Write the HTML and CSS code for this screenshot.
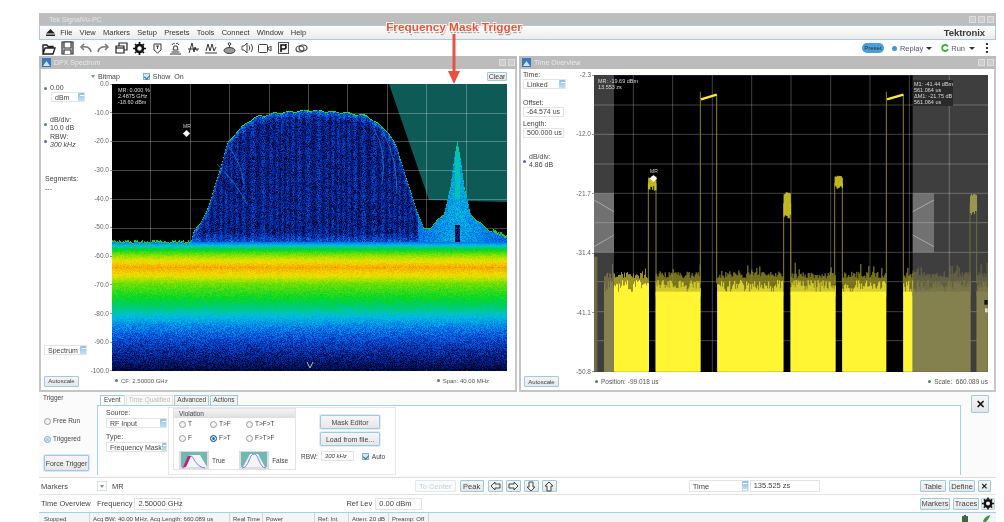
FILE: index.html
```html
<!DOCTYPE html>
<html lang="en">
<head>
<meta charset="utf-8">
<title>Tek SignalVu-PC</title>
<link rel="stylesheet" href="styles.css">
</head>
<body>
<div class="app">
  <header class="titlebar">
    <span class="title">Tek SignalVu-PC</span>
    <span class="winbtns"><i></i><i></i><i></i></span>
  </header>
  <nav class="menubar">
    <svg class="eject" width="9" height="7" viewBox="0 0 9 7"><path d="M4.5 0 9 4.5H0zM0 5.5h9V7H0z" fill="#222"/></svg>
    <span>File</span><span>View</span><span>Markers</span><span>Setup</span><span>Presets</span><span>Tools</span><span>Connect</span><span>Window</span><span>Help</span>
    <b class="brand">Tektronix</b>
  </nav>
  <div class="toolbar">
    <div class="tools">
      <svg width="14" height="13" viewBox="0 0 14 13" fill="none" stroke="#222" stroke-width="1.4"><path d="M1 12V3h4l1 1.500h5V6M1 12l2-6h10l-2 6z"/></svg>
      <svg width="13" height="14" viewBox="0 0 13 14" fill="#ddd" stroke="#333" stroke-width="1.2"><path d="M1 1h11v12H1z"/><path d="M3 1h7v6H3zM3 13v-4h7v4" fill="#fff"/></svg>
      <svg width="13" height="10" viewBox="0 0 13 10" fill="none" stroke="#777" stroke-width="1.5"><path d="M12 9C11 4 7 3 3 4"/><path d="M5 1 2 4l3 3" /></svg>
      <svg width="13" height="10" viewBox="0 0 13 10" fill="none" stroke="#777" stroke-width="1.500"><path d="M1 9c1-5 5-6 9-5"/><path d="m8 1 3 3-3 3"/></svg>
      <svg width="13" height="12" viewBox="0 0 13 12" fill="#fff" stroke="#222" stroke-width="1.200"><path d="M4 1h8v7H4z"/><path d="M1 4h8v7H1z"/><path d="M1 6h8" /></svg>
      <svg width="13" height="13" viewBox="0 0 13 13"><circle cx="6.500" cy="6.500" r="3.500" fill="none" stroke="#111" stroke-width="2.600"/><path d="M6.500 0v13M0 6.500h13M2 2l9 9M11 2l-9 9" stroke="#111" stroke-width="1.700" stroke-dasharray="2 9 2"/></svg>
      <svg width="9" height="11" viewBox="0 0 9 11" fill="none" stroke="#333"><path d="M1 1h7v6L4.500 10 1 7z"/><path d="M3 3h3M4.500 3v3" /></svg>
      <svg width="13" height="13" viewBox="0 0 13 13" fill="none" stroke="#333"><path d="M1 12h11M2.500 10h8M4 8h5l-1-4H5zM3 3c1-2 2-2 3-1M7 2c1-1 2-1 3 1"/></svg>
      <svg width="11" height="12" viewBox="0 0 11 12" fill="none" stroke="#333"><path d="M1 11 4 1l2 9 1-5 1 3h2M0 7h11"/></svg>
      <svg width="12" height="12" viewBox="0 0 12 12" fill="none" stroke="#333"><path d="M1 9l2-7 2 7 2-7 2 7 2-4M0 11h12"/></svg>
      <svg width="13" height="12" viewBox="0 0 13 12" fill="#999" stroke="#333"><ellipse cx="6.500" cy="8.500" rx="5.500" ry="3"/><path d="M6.500 5V1.500" fill="none"/><circle cx="6.500" cy="2" r="1.300" fill="#fff"/></svg>
      <svg width="13" height="12" viewBox="0 0 13 12" fill="none" stroke="#444"><path d="M1 4h2l3-3v10L3 8H1zM8 3.500c1 1.500 1 3.500 0 5M10 2c2 2.500 2 5.500 0 8"/></svg>
      <svg width="14" height="9" viewBox="0 0 14 9" fill="#fff" stroke="#444"><rect x=".5" y=".5" width="9" height="8" rx="1"/><path d="m10 4 3-2v5l-3-2z"/></svg>
      <svg width="11" height="12" viewBox="0 0 11 12"><rect x=".5" y=".5" width="10" height="11" fill="#f4f4f4" stroke="#555"/><path d="M3 10V3h3a1.700 1.700 0 0 1 0 4H3M8 2v1" fill="none" stroke="#111" stroke-width="1.600"/></svg>
      <svg width="13" height="9" viewBox="0 0 13 9" fill="none" stroke="#444" stroke-width="1.200"><ellipse cx="5" cy="5" rx="4" ry="3"/><ellipse cx="8" cy="4" rx="4" ry="3"/></svg>
    </div>
    <div class="runctl">
      <span class="preset">Preset</span>
      <span class="dot blue"></span><span>Replay</span><i class="caret c1"></i>
      <svg class="runicon" width="8" height="8" viewBox="0 0 8 8" fill="none" stroke="#3fa93f" stroke-width="1.800"><path d="M6.800 2.500A3 3 0 1 0 7 5"/></svg><span>Run</span><i class="caret c2"></i>
      <span class="kebab"><i></i><i></i><i></i></span>
    </div>
  </div>

  <main class="panels">
    <section class="panel dpx">
      <div class="panelhead"><svg class="panelicon" width="9" height="9" viewBox="0 0 9 9"><path d="M0 0h9v9H0z" fill="#3b78b5"/><path d="M1 8 4.500 3 8 8z" fill="#cfe3f5"/></svg><span>DPX Spectrum</span><span class="winbtns"><i></i><i></i></span></div>
      <div class="dpxgrid">
        <div class="topstrip">
          <span class="tri"></span><span class="bm">Bitmap</span>
          <i class="check"></i><span>Show</span><span class="on">On</span>
          <button class="btn clear">Clear</button>
        </div>
        <aside class="side">
          <div class="setting"><i class="dot green"></i><span>0.00</span></div>
          <div class="sel unit"><span>dBm</span><i class="spin"></i></div>
          <div class="setting div"><i class="dot green"></i><span>dB/div:<br>10.0 dB</span></div>
          <div class="setting rbw"><i class="dot blue"></i><span>RBW:<br><em>300 kHz</em></span></div>
          <div class="segs">Segments:<br>---</div>
          <div class="sel spectrum"><span>Spectrum</span><i class="spin"></i></div>
        </aside>
        <div class="axis axisl">
          <span>0.0</span><span>-10.0</span><span>-20.0</span><span>-30.0</span><span>-40.0</span><span>-50.0</span><span>-60.0</span><span>-70.0</span><span>-80.0</span><span>-90.0</span><span>-100.0</span>
        </div>
        <div class="plot">
          <canvas id="dpx" width="395" height="287"></canvas>
          <div class="readout rdpx">MR: 0.000 %<br>2.4875 GHz<br>-18.60 dBm</div>
          <div class="marker mdpx"><span>MR</span><i></i></div>
        </div>
        <footer class="foot">
          <button class="btn auto">Autoscale</button>
          <span class="cf"><i class="dot green"></i>CF: 2.50000 GHz</span>
          <span class="span"><i class="dot green"></i>Span: 40.00 MHz</span>
        </footer>
      </div>
    </section>
    <section class="panel overview">
      <div class="panelhead"><svg class="panelicon" width="9" height="9" viewBox="0 0 9 9"><path d="M0 0h9v9H0z" fill="#3b78b5"/><path d="M1 8 4.500 3 8 8z" fill="#cfe3f5"/></svg><span>Time Overview</span><span class="winbtns"><i></i><i></i></span></div>
      <div class="ovgrid">
        <aside class="side ovside">
          <div class="lbl">Time:</div>
          <div class="sel linked"><span>Linked</span><i class="spin"></i></div>
          <div class="lbl offset">Offset:</div>
          <div class="field">-64.574 us</div>
          <div class="lbl length">Length:</div>
          <div class="field">500.000 us</div>
          <div class="setting ovdiv"><i class="dot blue"></i><span>dB/div:<br>4.86 dB</span></div>
        </aside>
        <div class="axis axisr">
          <span>-2.3</span><span>-12.0</span><span>-21.7</span><span>-31.4</span><span>-41.1</span><span>-50.8</span>
        </div>
        <div class="plot plotr">
          <canvas id="time" width="394" height="297"></canvas>
          <div class="readout rmr">MR: -19.69 dBm<br>13.553 zs</div>
          <div class="readout rm1">M1: -41.44 dBm<br>561.064 us<br>&#916;M1: -21.75 dB<br>561.064 us</div>
          <div class="marker mtime"><span>MR</span><i></i></div>
        </div>
        <footer class="foot">
          <button class="btn auto">Autoscale</button>
          <span class="cf"><i class="dot green"></i>Position: -99.018 us</span>
          <span class="span"><i class="dot green"></i>Scale: &nbsp;660.089 us</span>
        </footer>
      </div>
    </section>
  </main>

  <section class="trigger">
    <div class="trigleft">
      <div class="trigtitle">Trigger</div>
      <label class="radio freerun"><i></i>Free Run</label>
      <label class="radio"><i class="inner"></i>Triggered</label>
      <button class="btn force">Force Trigger</button>
    </div>
    <div class="trigmain">
      <div class="tabs"><span class="tab active">Event</span><span class="tab dis">Time Qualified</span><span class="tab">Advanced</span><span class="tab">Actions</span></div>
      <div class="tabbody">
        <div class="srccol">
          <div class="lbl">Source:</div>
          <div class="sel src"><span>RF Input</span><i class="spin"></i></div>
          <div class="lbl type">Type:</div>
          <div class="sel src"><span>Frequency Mask</span><i class="spin"></i></div>
        </div>
        <div class="maskbox">
          <div class="violation">
            <div class="vhead">Violation</div>
            <div class="vgrid">
              <label class="radio"><i></i>T</label><label class="radio"><i></i>T&gt;F</label><label class="radio"><i></i>T&gt;F&gt;T</label>
              <label class="radio"><i></i>F</label><label class="radio"><i class="sel-on"></i>F&gt;T</label><label class="radio"><i></i>F&gt;T&gt;F</label>
            </div>
            <div class="thumbs">
              <svg width="30" height="18" viewBox="0 0 30 18"><rect width="30" height="18" fill="#ddd"/><path d="M2 1h26v15H2z" fill="#6fb9b2"/><path d="M4 16 11 4h10l7 12z" fill="#f2f5f7"/><path d="M3 17c6 0 6-12 9-12s4 11 14 12" fill="none" stroke="#8a7be0"/><path d="M4 16 9 5h3l-5 11z" fill="#c0207a"/></svg>
              <span>True</span>
              <svg class="falseicon" width="30" height="18" viewBox="0 0 30 18"><rect width="30" height="18" fill="#ddd"/><path d="M2 1h26v15H2z" fill="#6fb9b2"/><path d="M4 16 11 3h8l7 13z" fill="#f2f5f7"/><path d="M3 17c7 0 7-14 12-14s5 14 12 14" fill="none" stroke="#8a7be0"/></svg>
              <span>False</span>
            </div>
          </div>
          <div class="maskctl">
            <button class="btn wide">Mask Editor</button>
            <button class="btn wide">Load from file...</button>
            <div class="rbwrow"><span>RBW:</span><span class="field small"><em>300 kHz</em></span><i class="check"></i><span>Auto</span></div>
          </div>
        </div>
      </div>
    </div>
    <div class="trigclose"><button class="btn closebig">&#10005;</button></div>
  </section>

  <section class="markers">
    <span class="rowtitle">Markers</span>
    <span class="dropbtn"><i class="tri"></i></span>
    <span class="mr">MR</span>
    <button class="btn dim tocenter">To Center</button>
    <button class="btn">Peak</button>
    <button class="btn arrow"><svg width="11" height="10" viewBox="0 0 11 10"><path d="M1 5l4-4v2h5v4H5v2z" fill="#f4f4f4" stroke="#444"/></svg></button>
    <button class="btn arrow"><svg width="11" height="10" viewBox="0 0 11 10"><path d="M10 5 6 1v2H1v4h5v2z" fill="#f4f4f4" stroke="#444"/></svg></button>
    <button class="btn arrow"><svg width="10" height="11" viewBox="0 0 10 11"><path d="M5 10 1 6h2V1h4v5h2z" fill="#f4f4f4" stroke="#444"/></svg></button>
    <button class="btn arrow"><svg width="10" height="11" viewBox="0 0 10 11"><path d="M5 1 1 5h2v5h4V5h2z" fill="#f4f4f4" stroke="#444"/></svg></button>
    <div class="sel timesel"><span>Time</span><i class="spin"></i></div>
    <span class="field timeval">135.525 zs</span>
    <button class="btn table">Table</button>
    <button class="btn">Define</button>
    <button class="btn xbtn">&#10005;</button>
  </section>

  <section class="overviewrow">
    <span class="rowtitle">Time Overview</span>
    <span class="freq">Frequency</span><span class="field rowfield">2.50000 GHz</span>
    <span class="ref">Ref Lev</span><span class="field rowfield">0.00 dBm</span>
    <button class="btn mk">Markers</button>
    <button class="btn">Traces</button>
    <button class="btn gear"><svg width="13" height="13" viewBox="0 0 13 13"><circle cx="6.500" cy="6.500" r="3.500" fill="none" stroke="#111" stroke-width="2.600"/><path d="M6.500 0v13M0 6.500h13M2 2l9 9M11 2l-9 9" stroke="#111" stroke-width="1.700" stroke-dasharray="2 9 2"/></svg></button>
  </section>

  <footer class="status">
    <span>Stopped</span><span>Acq BW: 40.00 MHz, Acq Length: 660.089 us</span><span>Real Time</span><span>Power</span><span>Ref: Int</span><span>Atten: 20 dB</span><span>Preamp: Off</span>
    <span class="statusicons">
      <svg width="6" height="8" viewBox="0 0 6 8"><path d="M2 0h2v1h2v7H0V1h2z" fill="#3c6a3c"/></svg>
      <svg width="8" height="8" viewBox="0 0 8 8"><path d="M1 8C1 4 4 1 8 0 7 4 5 7 1 8z" fill="#3f9a3f"/></svg>
    </span>
  </footer>

  <div class="annotation">
    <span class="anntext">Frequency Mask Trigger</span>
    <svg width="14" height="51" viewBox="0 0 14 51"><path d="M7 0v40" stroke="#e9503e" stroke-width="3"/><path d="M1 37h12L7 50z" fill="#e9503e"/></svg>
  </div>
</div>
<script src="script.js"></script>
</body>
</html>
```
FILE: styles.css
```css
* { box-sizing: border-box; }
html, body { margin: 0; padding: 0; background: #fff; }
body { width: 1004px; height: 522px; overflow: hidden; font-family: "Liberation Sans", Arial, sans-serif; font-size: 7px; color: #444; }
.app { position: relative; width: 957px; height: 509px; margin: 13px 0 0 39px; display: flex; flex-direction: column; filter: blur(.5px); }
i { display: block; font-style: normal; }
button { font-family: inherit; }

.titlebar { height: 12px; flex: none; background: #bdbdbd; display: flex; align-items: center; justify-content: space-between; padding: 0 2px 0 10px; color: #e6e6e6; font-size: 7px; }
.winbtns { display: flex; gap: 2px; margin-left: auto; }
.winbtns i { width: 7px; height: 7px; background: #ccc; border: 1px solid #ddd; }

.menubar { height: 15px; flex: none; display: flex; align-items: center; gap: 7.250px; padding: 0 10px 0 6px; background: linear-gradient(#fdfdfd, #ececec); border: 1px solid #a8cde0; font-size: 7.500px; color: #333; }
.eject { margin-right: -2px; }
.brand { margin-left: auto; font-size: 9.500px; color: #3a3a3a; letter-spacing: -.1px; }

.toolbar { height: 16px; flex: none; display: flex; align-items: center; justify-content: space-between; background: #fff; }
.tools { display: grid; grid-template-columns: repeat(15, 18px); justify-items: center; align-items: center; margin-left: 1px; }
.runctl { display: flex; align-items: center; font-size: 7.500px; color: #557; margin-right: 8px; }
.preset { width: 22px; height: 10px; border-radius: 5px; background: #4b9fd8; color: #234; font-size: 6px; text-align: center; line-height: 10px; margin-right: 8px; }
.dot { width: 3px; height: 3px; border-radius: 50%; flex: none; }
.dot.blue { background: #4b6fb0; }
.dot.green { background: #4e8a4e; }
.runctl .dot.blue { width: 5px; height: 5px; background: #3f95d8; margin-right: 3px; }
.caret { width: 0; height: 0; border: 3px solid transparent; border-top: 3.500px solid #333; border-bottom: 0; }
.c1 { margin: 0 9px 0 3px; }
.c2 { margin: 0 11px 0 4px; }
.runicon { margin-right: 2px; }
.kebab { display: flex; flex-direction: column; gap: 2px; }
.kebab i { width: 2px; height: 2px; background: #333; }

.panels { height: 336px; flex: none; display: grid; grid-template-columns: 478px 477px; gap: 2px; }
.panel { background: #fff; border: 2px solid #c6c6c6; border-top: 0; display: flex; flex-direction: column; min-width: 0; }
.panelhead { height: 13px; flex: none; margin: 0 -2px; padding: 0 2px 0 3px; background: #bcbcbc; color: #e9e9e9; display: flex; align-items: center; gap: 3px; font-size: 7px; }
.panelhead .winbtns { margin-left: auto; }

.dpxgrid { flex: 1; display: grid; grid-template-columns: 49px 22px 395px; grid-template-rows: 15px 287px 1fr; }
.topstrip { grid-column: 2 / 4; grid-row: 1; display: flex; align-items: center; gap: 3px; font-size: 7px; padding-left: 1px; }
.tri { width: 0; height: 0; border: 2.500px solid transparent; border-top: 3px solid #6d8fb3; border-bottom: 0; }
.bm { margin-right: 20px; }
.check { width: 7px; height: 7px; flex: none; background: #d5e8f5; border: 1px solid #7fb3d5; position: relative; }
.check::after { content: ""; position: absolute; left: 1px; top: 0; width: 3px; height: 4px; border: solid #2e6da4; border-width: 0 1px 1px 0; transform: rotate(40deg); }
.on { margin-left: 1px; }
.clear { margin-left: auto; width: 20px; height: 9px; font-size: 6px; }

.btn { display: inline-flex; align-items: center; justify-content: center; padding: 0 2px; border: 1px solid #9fcbe2; border-radius: 1px; background: linear-gradient(#f6f6f6, #e6e6e6); color: #444; font-size: 7px; white-space: nowrap; }

.side { grid-column: 1; grid-row: 1 / 3; display: flex; flex-direction: column; padding: 15px 0 0 3px; }
.setting { display: flex; align-items: center; gap: 3px; line-height: 8px; }
.setting.div { margin-top: 14px; }
.setting.rbw { margin-top: 1px; }
.sel { display: flex; align-items: center; justify-content: space-between; height: 10px; padding-left: 3px; background: #fff; border: 1px solid #e4e4e4; color: #444; white-space: nowrap; overflow: hidden; }
.spin { width: 7px; height: 9px; margin: 0 -1px 0 0; background: linear-gradient(#8ec1e4, #cfe3f2); border-radius: 1px; position: relative; flex: none; }
.spin::after { content: ""; position: absolute; left: 1.500px; top: 2px; width: 4px; height: 5px; border-top: 1px solid #fff; border-bottom: 1px solid #fff; }
.unit { width: 34px; margin: 0 0 0 7px; }
.segs { margin: 25px 0 0 1px; line-height: 10px; }
.spectrum { width: 43px; margin: auto 0 16px 0; }

.axis { display: flex; flex-direction: column; justify-content: space-between; align-items: flex-end; margin: -4px 0; font-size: 6.500px; line-height: 8px; color: #666; grid-row: 2; }
.axis span { display: flex; align-items: center; gap: 1px; }
.axis span::after { content: ""; width: 2px; height: 1px; background: #999; }
.axisl { grid-column: 2; }

.plot { position: relative; background: #000; }
.dpxgrid .plot { grid-column: 3; grid-row: 2; }
canvas { display: block; }
.readout { position: absolute; font-size: 5.500px; line-height: 6px; color: #d8d8d8; white-space: nowrap; }
.rdpx { left: 6px; top: 3px; }
.marker { position: absolute; display: flex; flex-direction: column; align-items: center; font-size: 5px; color: #ccc; line-height: 6px; }
.marker i { width: 5px; height: 5px; margin-top: 2px; background: #fff; transform: rotate(45deg); }
.mdpx { left: 71px; top: 39px; }
.mtime { left: 56px; top: 93px; }

.foot { grid-column: 1 / -1; display: flex; align-items: center; padding-left: 3px; font-size: 6.500px; color: #555; }
.auto { width: 35px; height: 11px; font-size: 6px; margin-top: 1px; }
.cf, .span { display: flex; align-items: center; gap: 3px; }
.dpx .foot { font-size: 6px; }
.dpx .cf { margin-left: 36px; }
.dpx .span { margin-left: auto; margin-right: 18px; }

.ovgrid { flex: 1; display: grid; grid-template-columns: 51px 22px 394px; grid-template-rows: 6px 297px 1fr; }
.ovside { padding: 2px 0 0 2px; grid-row: 1 / 3; }
.lbl { line-height: 8px; }
.field { display: block; background: #fff; border: 1px solid #e4e4e4; height: 10px; line-height: 8px; padding-left: 3px; color: #444; width: 41px; white-space: nowrap; }
.linked { width: 43px; }
.offset { margin-top: 10px; }
.length { margin-top: 3px; }
.ovdiv { margin-top: 15px; }
.axisr { grid-column: 2; }
.ovgrid .plot { grid-column: 3; grid-row: 2; }
.rmr { left: 4px; top: 3px; }
.rm1 { left: 319px; top: 5px; width: 40px; padding: 1px 1px; background: #2a2a2a; overflow: hidden; }
.ovgrid .cf { margin-left: 36px; }
.ovgrid .span { margin-left: auto; margin-right: 0; }

.trigger { height: 86px; flex: none; display: grid; grid-template-columns: 58px 864px 1fr; background: #fbfbfb; border-bottom: 1px solid #ddd; padding-top: 1px; }
.trigleft { padding: 1px 0 0 4px; display: flex; flex-direction: column; align-items: flex-start; }
.trigtitle { font-size: 6.500px; }
.radio { display: flex; align-items: center; gap: 2px; font-size: 6.500px; line-height: 8px; white-space: nowrap; }
.radio i { width: 7px; height: 7px; border-radius: 50%; border: 1px solid #9a9a9a; background: #f4f4f4; flex: none; }
.radio i.inner { background: #9fcbe2; border-color: #7fb3d5; box-shadow: inset 0 0 0 1px #e4f0f8; }
.radio i.sel-on { background: #1d6fc0; border-color: #1d5f9f; box-shadow: inset 0 0 0 1px #fff; }
.trigleft .radio { margin-left: 1px; }
.freerun { margin-top: 16px; }
.trigleft .radio + .radio { margin-top: 10px; }
.force { width: 45px; height: 16px; margin: 12px 0 0 1px; box-shadow: 0 0 0 1px #d6e8f3; }

.tabs { display: flex; height: 10px; margin: 2px 0 0 3px; gap: 1px; font-size: 6.500px; }
.tab { padding: 0 2px; line-height: 8px; border: 1px solid #9fcbe2; border-bottom: 0; background: #f2f2f2; }
.tab.active { background: #fff; padding: 0 3px; border-right-color: #ddd; }
.tab.dis { color: #bbb; background: #fafafa; border-color: #e2e2e2; }
.tabbody { height: 70px; background: #fff; border: 1px solid #a8d0e4; border-bottom: 0; display: flex; padding: 1px 0 0 8px; gap: 2px; }
.srccol { width: 60px; padding-top: 2px; }
.src { width: 61px; margin-top: 1px; }
.type { margin-top: 5px; }
.maskbox { width: 228px; height: 68px; border: 1px solid #e8e8e8; display: flex; padding: 0 0 0 4px; }
.violation { width: 123px; height: 62px; border: 1px solid #e4e4e4; }
.vhead { height: 9px; line-height: 9px; padding-left: 5px; font-size: 6.500px; background: linear-gradient(#f4f4f4, #dedede); }
.vgrid { display: grid; grid-template-columns: 31px 36px 1fr; row-gap: 6px; padding: 1px 0 0 5px; margin-top: 1px; }
.thumbs { display: flex; align-items: center; gap: 3px; padding-left: 5px; margin-top: 9px; font-size: 6.500px; }
.falseicon { margin-left: 11px; }
.maskctl { width: 90px; margin-left: 4px; padding-top: 7px; display: flex; flex-direction: column; align-items: flex-end; }
.wide { width: 60px; height: 14px; margin-right: 10px; box-shadow: 0 0 0 1px #e0edf5; flex: none; }
.wide + .wide { margin-top: 3px; }
.rbwrow { display: flex; align-items: center; align-self: flex-start; gap: 3px; margin: 5px 0 0 1px; font-size: 6.500px; white-space: nowrap; }
.small { width: 33px; margin: 0 5px 0 0; font-size: 6px; }
.trigclose { padding: 2px 0 0 10px; }
.closebig { width: 18px; height: 18px; font-size: 11px; font-weight: bold; color: #111; padding: 0; }

.markers, .overviewrow { flex: none; display: flex; align-items: center; font-size: 7.500px; color: #444; }
.markers { height: 17px; border-bottom: 1px solid #e4e4e4; padding-right: 5px; }
.overviewrow { height: 17px; padding-right: 1px; }
.rowtitle { font-size: 7.500px; width: 58px; padding-left: 2px; white-space: nowrap; }
.markers .btn, .overviewrow .btn { height: 12px; font-size: 7.500px; }
.dropbtn { width: 10px; height: 10px; border: 1px solid #ddd; display: flex; align-items: center; justify-content: center; }
.mr { margin-left: 5px; }
.tocenter { width: 41px; margin-left: 291px; }
.dim { color: #bfd3dd; border-color: #dce9f0; background: #fafafa; }
.tocenter + .btn { width: 24px; margin: 0 4px; }
.arrow { width: 15px; margin-right: 3px; padding: 0; }
.timesel { width: 60px; margin-left: 129px; height: 12px; }
.timesel .spin { height: 11px; }
.timeval { width: 70px; margin-left: 1px; height: 12px; line-height: 10px; }
.table { width: 26px; margin-left: auto; }
.table + .btn { width: 26px; margin-left: 3px; }
.xbtn { width: 13px; margin-left: 3px; color: #111; font-weight: bold; padding: 0; }
.freq { margin-right: 2px; white-space: nowrap; }
.rowfield { width: 47px; height: 12px; line-height: 10px; }
.ref { margin-left: 165px; margin-right: 3px; white-space: nowrap; }
.mk { width: 30px; margin-left: auto; }
.mk + .btn { width: 26px; margin-left: 3px; }
.gear { width: 14px; margin-left: 2px; padding: 0; border-color: #b6d6e8; }

.status { height: 10px; flex: none; display: grid; grid-template-columns: 49px 140px 33px 52px 34px 40px 40px 1fr; background: #f3f5f6; border-top: 1px solid #a8d0e4; font-size: 6px; line-height: 9px; padding-left: 2px; overflow: hidden; }
.status > span { padding: 2px 0 0 3px; border-right: 1px solid #d4d4d4; white-space: nowrap; }
.status > span:last-child { border: 0; }
.statusicons { display: flex; justify-content: flex-end; gap: 14px; padding-right: 6px !important; }

.annotation { position: absolute; left: 346px; top: 8px; display: flex; flex-direction: column; align-items: center; width: 138px; }
.anntext { font-size: 11.800px; font-weight: bold; line-height: 13px; color: #ef5036; white-space: nowrap; text-shadow: 1px 1px 0 #fff, -1px -1px 0 #fff, 1px -1px 0 #fff, -1px 1px 0 #fff, 1px 2px 1px #888; }
.annotation svg { margin-top: 0; }
```
FILE: script.js
```js
(function () {
  var seed = 12345;
  function rnd() {
    seed = (seed * 1664525 + 1013904223) >>> 0;
    return seed / 4294967296;
  }
  function lerpTable(table, v) {
    if (v <= table[0][0]) return table[0].slice(1);
    for (var i = 1; i < table.length; i++) {
      if (v <= table[i][0]) {
        var a = table[i - 1], b = table[i], t = (v - a[0]) / (b[0] - a[0]), out = [];
        for (var k = 1; k < a.length; k++) out.push(a[k] + (b[k] - a[k]) * t);
        return out;
      }
    }
    return table[table.length - 1].slice(1);
  }

  /* DPX bitmap */
  var colors = [
    [0, 0, 0, 0], [0.08, 0, 10, 70], [0.18, 0, 45, 170], [0.3, 0, 100, 230],
    [0.42, 0, 190, 225], [0.52, 0, 215, 40], [0.66, 130, 225, 0],
    [0.8, 240, 225, 0], [0.95, 245, 165, 0], [1, 240, 120, 0]
  ];
  var density = [
    [150, 0.12], [157, 0.3], [161, 0.42], [166, 0.54], [173, 0.72], [183, 0.93], [191, 0.8],
    [199, 0.64], [213, 0.53], [226, 0.46], [236, 0.39], [249, 0.29], [263, 0.19], [286, 0.07]
  ];
  var envPts = [
    [8, 487], [240, 487], [250, 450], [270, 430], [300, 360], [330, 260], [350, 190], [380, 150],
    [430, 110], [500, 96], [600, 88], [700, 95], [770, 105], [830, 150], [860, 200], [890, 300],
    [920, 390], [940, 445], [960, 440], [1000, 400], [1020, 320], [1032, 230], [1041, 180],
    [1050, 230], [1062, 320], [1080, 400], [1130, 445], [1190, 470]
  ].map(function (p) { return [p[0] / 3 - 2, p[1] / 3 - 4]; });

  var c = document.getElementById("dpx");
  var g = c.getContext("2d");
  var W = c.width, H = c.height;
  g.fillStyle = "#000";
  g.fillRect(0, 0, W, H);
  g.fillStyle = "#0e5a56";
  g.beginPath();
  g.moveTo(277, 0); g.lineTo(317, 116); g.lineTo(395, 118); g.lineTo(395, 0); g.closePath();
  g.fill();
  g.strokeStyle = "rgba(255,255,255,.27)";
  g.lineWidth = 1;
  for (var i = 1; i < 10; i++) {
    var gx = Math.round(i * 39.4) - 0.5;
    g.beginPath(); g.moveTo(gx, 0); g.lineTo(gx, H); g.stroke();
    var gy = Math.round(i * 28.7) + 0.5;
    g.beginPath(); g.moveTo(0, gy); g.lineTo(W, gy); g.stroke();
  }
  var img = g.getImageData(0, 0, W, H), d = img.data;
  for (var x = 0; x < W; x++) {
    var ripple = Math.sin(x * 0.42) * 0.8;
    var low = x < 79 || x > 380;
    var top = lerpTable(envPts, x)[0] + (low ? (rnd() - 0.5) * 3 : ripple);
    var stripe = 0.5 + 0.5 * Math.sin(x * 0.9 + Math.sin(x * 0.11) * 3);
    var isPeak = x > 305;
    var dp = Math.abs(x - 345);
    for (var y = 0; y < H; y++) {
      var t = -1;
      if (y >= top) {
        var depth = y - top;
        var band = lerpTable(density, y)[0];
        if (y >= 158) {
          var amp = Math.max(0, Math.min(1, (y - 235) / 45));
          t = band * (1 + (rnd() - 0.5) * (0.12 + 1.2 * amp));
        } else if (isPeak) {
          t = 0.39 - dp * 0.002 + (rnd() - 0.5) * 0.1;
          if (dp < 3 && y < 115) t = 0.44 + (rnd() - 0.5) * 0.06;
          if (dp < 3 && y > 140) t = rnd() * 0.2;
          if (depth < 0.9) t = 0.54;
        } else {
          var edge = Math.max(0, 1 - depth / 10);
          t = (0.13 + 0.07 * stripe + edge * 0.14) * (0.6 + rnd() * 0.75);
          if (rnd() < 0.18 && edge < 0.5) t *= 0.35;
          if (y > 148) t += (y - 148) * 0.012;
          if (depth < 0.9) t = 0.54 + rnd() * 0.06;
        }
      } else if (low && y > top - 1.5) {
        t = 0.5;
      }
      if (t > 0.03) {
        var col = lerpTable(colors, Math.min(1, t));
        var p = (y * W + x) * 4;
        d[p] = col[0]; d[p + 1] = col[1]; d[p + 2] = col[2]; d[p + 3] = 255;
      }
    }
  }
  g.putImageData(img, 0, 0);
  g.strokeStyle = "rgba(90,175,235,.45)";
  [[105, 80, 125, 100, 135, 120], [115, 60, 130, 80, 132, 100], [272, 50, 285, 75, 285, 110], [262, 45, 275, 65, 270, 100]].forEach(function (a) {
    g.beginPath(); g.moveTo(a[0], a[1]); g.quadraticCurveTo(a[2], a[3], a[4], a[5]); g.stroke();
  });
  g.strokeStyle = "#bbb";
  g.beginPath(); g.moveTo(195, 278); g.lineTo(198, 284); g.lineTo(201, 278); g.stroke();

  /* Time overview: drawn in the coordinates of a 3x view of the plot */
  var tc = document.getElementById("time");
  var h = tc.getContext("2d");
  h.setTransform(1 / 3, 0, 0, 1 / 3, -4, -5);
  h.fillStyle = "#000";
  h.fillRect(0, 0, 1300, 1000);
  h.fillStyle = "#3e3e3e";
  h.fillRect(0, 0, 72, 1000);
  h.fillRect(968, 0, 400, 1000);
  h.strokeStyle = "rgba(255,255,255,.25)";
  h.lineWidth = 3;
  [130, 248, 367, 485, 603, 722, 840, 958, 1078].forEach(function (v) {
    h.beginPath(); h.moveTo(v, 0); h.lineTo(v, 1000); h.stroke();
  });
  [105, 193, 282, 370, 458, 547, 635, 725, 812].forEach(function (v) {
    h.beginPath(); h.moveTo(0, v); h.lineTo(1300, v); h.stroke();
  });
  h.fillStyle = "#3f40e0";
  h.fillRect(72, 9, 896, 7);

  function noiseBar(a, b, bright) {
    var solid = bright ? "#fff533" : "#85814f";
    var spike = bright ? "#9a9226" : "#6d6a45";
    h.lineWidth = 3;
    for (var zx = a; zx < b; zx += 3) {
      var r = rnd();
      var spikeTop = 625 - rnd() * 20 - (r > 0.8 ? rnd() * 30 : 0);
      h.strokeStyle = spike;
      h.beginPath(); h.moveTo(zx + 1.5, spikeTop); h.lineTo(zx + 1.5, 680); h.stroke();
      var solidTop = 630 + rnd() * 28;
      if (r < 0.12) solidTop += 20;
      h.fillStyle = solid;
      h.fillRect(zx, solidTop, 3, 905 - solidTop);
    }
    h.fillStyle = solid;
    h.fillRect(a, 665, b - a, 240);
  }
  [[72, 175], [197, 330], [382, 580], [602, 735], [757, 888], [940, 968]].forEach(function (b) { noiseBar(b[0], b[1], true); });
  [[42, 72], [968, 1140], [1160, 1193]].forEach(function (b) { noiseBar(b[0], b[1], false); });
  h.fillStyle = "#6d6a45";
  h.fillRect(12, 560, 10, 345);

  function pulse(a, b, t1, t2, lineTop, bright) {
    h.strokeStyle = bright ? "#8a8418" : "#6f6c42";
    h.lineWidth = 3;
    h.beginPath(); h.moveTo(a, 640); h.lineTo(a, lineTop); h.stroke();
    h.beginPath(); h.moveTo(b, lineTop); h.lineTo(b, 640); h.stroke();
    h.fillStyle = bright ? "#f5ea2c" : "#9a9650";
    for (var zx = a; zx < b; zx += 3) {
      var top = t1 + rnd() * 7, bot = t2 - rnd() * 14;
      h.fillRect(zx, top, 3, bot - top);
    }
  }
  pulse(175, 198, 318, 362, 340, true);
  pulse(581, 602, 366, 445, 400, true);
  pulse(734, 757, 317, 360, 340, true);
  pulse(1140, 1160, 370, 435, 400, false);
  [[331, 380], [889, 940]].forEach(function (p) {
    h.strokeStyle = "#8a8418";
    h.lineWidth = 3;
    h.beginPath(); h.moveTo(p[0], 640); h.lineTo(p[0], 65); h.stroke();
    h.beginPath(); h.moveTo(p[1], 640); h.lineTo(p[1], 72); h.stroke();
    h.strokeStyle = "#f8ee2c";
    h.lineWidth = 7;
    h.beginPath(); h.moveTo(p[0] + 2, 88); h.lineTo(p[1], 74); h.stroke();
  });

  function handle(x0, x1, tipAtLeft) {
    h.fillStyle = "rgba(190,190,190,.4)";
    h.fillRect(x0, 370, x1 - x0, 177);
    h.strokeStyle = "rgba(235,235,235,.45)";
    h.lineWidth = 3;
    h.beginPath();
    if (tipAtLeft) {
      h.moveTo(x1, 390); h.lineTo(x0, 425); h.moveTo(x0, 495); h.lineTo(x1, 530);
    } else {
      h.moveTo(x0, 390); h.lineTo(x1, 425); h.moveTo(x1, 495); h.lineTo(x0, 530);
    }
    h.stroke();
  }
  handle(12, 72, false);
  handle(968, 1032, true);

  h.fillStyle = "#111";
  h.fillRect(1183, 690, 10, 14);
  h.fillStyle = "#ddd";
  h.fillRect(1185, 715, 8, 12);
})();
```
